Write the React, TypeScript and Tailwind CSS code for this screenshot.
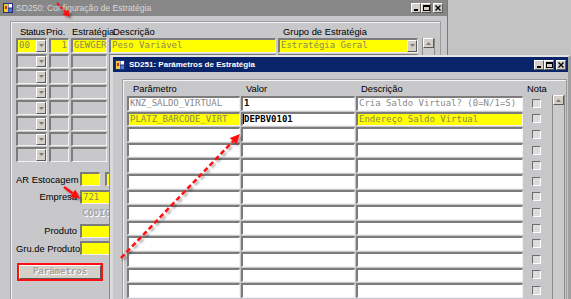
import React from "react";

const sunken =
  "border-t-2 border-l-2 border-t-[#7c7c7c] border-l-[#7c7c7c] border-b border-r border-b-[#f2f2f2] border-r-[#f2f2f2]";
const raised =
  "bg-[#d4d0c8] border-t border-l border-t-white border-l-white border-b border-r border-b-[#5a5a5a] border-r-[#5a5a5a]";
const mono = "font-['DejaVu_Sans_Mono',monospace] text-[9px] leading-none whitespace-nowrap";
const label = "font-['Liberation_Sans',Arial,sans-serif] text-[9.4px] leading-[11px] text-black whitespace-nowrap";

function Field({ className, children }: { className: string; children?: React.ReactNode }) {
  return <div className={`${sunken} ${className} flex items-center overflow-hidden`}>{children}</div>;
}

function DropBtn() {
  return (
    <div className={`${raised} w-[10px] h-full flex items-center justify-center shrink-0`}>
      <svg width="5" height="3" viewBox="0 0 5 3">
        <path d="M0 0h5L2.5 3z" fill="#7a7a7a" />
      </svg>
    </div>
  );
}

function AppIcon() {
  return (
    <svg width="10" height="10" viewBox="0 0 10 10" className="shrink-0">
      <rect width="10" height="10" fill="#20307a" />
      <rect x="1" y="1" width="4" height="8" fill="#f0c830" />
      <rect x="5.5" y="1" width="3.5" height="3.5" fill="#ffffff" />
      <rect x="5.5" y="5.5" width="3.5" height="3.5" fill="#4a7ad8" />
      <rect x="2" y="3" width="2" height="3" fill="#d03020" />
    </svg>
  );
}

function TitleButtons() {
  return (
    <div className="flex items-center">
      <div className={`${raised} w-[10px] h-[10px] flex items-end justify-center pb-[1px]`}>
        <div className="w-[4px] h-[2px] bg-black" />
      </div>
      <div className={`${raised} w-[10px] h-[10px] flex items-center justify-center`}>
        <div className="w-[7px] h-[6px] border border-black border-t-2" />
      </div>
      <div className={`${raised} w-[10px] h-[10px] ml-[2px] flex items-center justify-center`}>
        <svg width="6" height="6" viewBox="0 0 6 6">
          <path d="M0.5 0.5L5.5 5.5M5.5 0.5L0.5 5.5" stroke="#000" strokeWidth="1.4" />
        </svg>
      </div>
    </div>
  );
}

function Check() {
  return (
    <div className="w-[9px] h-[9px] border-t border-l border-t-[#6e6e6e] border-l-[#6e6e6e] border-b border-r border-b-white border-r-white bg-[#dcdcdc]" />
  );
}

function ScrollUp({ h }: { h: string }) {
  return (
    <div className={`${h} w-[13px] flex flex-col border-l border-l-[#8a8a8a] border-r border-r-[#8a8a8a] bg-[#cbcbcb]`}>
      <div className={`${raised} h-[10px] flex items-center justify-center`}>
        <svg width="5" height="3" viewBox="0 0 5 3">
          <path d="M0 3h5L2.5 0z" fill="#7a7a7a" />
        </svg>
      </div>
    </div>
  );
}

function Window1() {
  const grayRows = [0, 1, 2, 3, 4, 5, 6];
  const yText = "text-[#8a8a52]";
  return (
    <div className="absolute left-0 top-0 w-[448px] h-[330px] flex flex-col bg-[#c8c7ca] border-r border-r-[#7a7a7a]">
      <div className="h-[16px] bg-[#878787] flex items-center pl-[3px] pr-[4px] shrink-0">
        <AppIcon />
        <span className="ml-[3px] font-['Liberation_Sans',Arial,sans-serif] text-[8.6px] text-[#d8d8d8] whitespace-nowrap flex-1">
          SD250: Configuração de Estratégia
        </span>
        <TitleButtons />
      </div>
      <div className="pl-[10px] pt-[5px]">
        <div className="w-[431px] h-[320px] border border-[#9c9c9c] shadow-[inset_1px_1px_0_#f4f4f4] pl-[5px]">
          <div className="h-[16px] flex items-end pb-[1px]">
            <span className={`${label} w-[26px] ml-[4px] tracking-[-0.3px]`}>Status</span>
            <span className={`${label} w-[26px]`}>Prio.</span>
            <span className={`${label} w-[41px]`}>Estratégia</span>
            <span className={`${label} w-[170px]`}>Descrição</span>
            <span className={label}>Grupo de Estratégia</span>
          </div>
          <div className="flex gap-[4px]">
            <div className="flex flex-col gap-[1px]">
              <div className="h-[14.6px] flex gap-[2px]">
                <Field className="w-[31px] bg-[#ffff00]">
                  <span className={`${mono} ${yText} flex-1 pl-[1px]`}>00</span>
                  <DropBtn />
                </Field>
                <Field className="w-[20px] bg-[#ffff00] justify-end">
                  <span className={`${mono} ${yText} pr-[1px]`}>1</span>
                </Field>
                <Field className="w-[36px] bg-[#ffff00]">
                  <span className={`${mono} ${yText} pl-[1px]`}>GEWGER</span>
                </Field>
                <Field className="w-[167px] bg-[#ffff00]">
                  <span className={`${mono} ${yText} pl-[1px]`}>Peso Variável</span>
                </Field>
                <Field className="w-[140px] bg-[#ffff00]">
                  <span className={`${mono} ${yText} flex-1 pl-[1px]`}>Estratégia Geral</span>
                  <DropBtn />
                </Field>
              </div>
              {grayRows.map((i) => (
                <div key={i} className="h-[14.6px] flex gap-[2px]">
                  <Field className="w-[31px] justify-end">
                    <DropBtn />
                  </Field>
                  <Field className="w-[20px]" />
                  <Field className="w-[36px]" />
                  <Field className="w-[167px]" />
                  <Field className="w-[140px] justify-end">
                    <DropBtn />
                  </Field>
                </div>
              ))}
            </div>
            <ScrollUp h="h-[124px]" />
          </div>

          <div className="mt-[10px] flex flex-col gap-[3.5px]">
            <div className="h-[14px] flex items-center gap-[3px]">
              <span className={`${label} w-[61px] text-right`}>AR Estocagem</span>
              <Field className="w-[20px] h-full bg-[#ffff00]" />
              <Field className="w-[30px] h-full bg-[#ffff00] ml-[2px]" />
            </div>
            <div className="h-[14px] flex items-center gap-[3px]">
              <span className={`${label} w-[61px] text-right`}>Empresa</span>
              <Field className="w-[60px] h-full bg-[#ffff00]">
                <span className={`${mono} ${yText} pl-[1px]`}>721</span>
              </Field>
            </div>
            <div className="h-[13px] flex items-center">
              <span className={`${mono} font-bold text-[#a2a2a2] ml-[66px] tracking-[0.3px] [text-shadow:1px_1px_0_#ffffff]`}>
                CODIGO
              </span>
            </div>
            <div className="h-[14px] flex items-center gap-[3px]">
              <span className={`${label} w-[61px] text-right`}>Produto</span>
              <Field className="w-[60px] h-full bg-[#ffff00]" />
            </div>
            <div className="h-[14px] flex items-center gap-[3px]">
              <span className={`${label} w-[61px] text-right`}>Gru.de Produto</span>
              <Field className="w-[60px] h-full bg-[#ffff00]" />
            </div>
            <div className="mt-[4px] ml-[1px] w-[86px] h-[18px] border-2 border-[#ff1010] p-0">
              <div className={`${raised} w-full h-full flex items-center justify-center`}>
                <span className={`${mono} font-bold text-[#a0a0a0] [text-shadow:1px_1px_0_#ffffff]`}>Parâmetros</span>
              </div>
            </div>
          </div>
        </div>
      </div>
    </div>
  );
}

function Window2() {
  const rows = Array.from({ length: 14 }, (_, i) => i);
  return (
    <div className="absolute left-[110px] top-[55px] w-[461px] h-[260px] flex flex-col bg-[#c8c7ca] border-t-2 border-t-[#e4e4e4] border-l-[3px] border-l-[#dadada] border-r-[3px] border-r-[#a0a0a0] shadow-[-1px_0_0_#8a8a8a]">
      <div className="h-[15px] bg-[#0a246a] flex items-center pl-[2px] pr-[2px] shrink-0">
        <AppIcon />
        <span className="ml-[4px] font-['Liberation_Sans',Arial,sans-serif] font-bold text-[8px] text-white whitespace-nowrap flex-1">
          SD251: Parâmetros de Estratégia
        </span>
        <TitleButtons />
      </div>
      <div className="pl-[9px] pt-[7px]">
        <div className="w-[445px] h-[240px] border border-[#9c9c9c] shadow-[inset_1px_1px_0_#f4f4f4] pl-[4px]">
          <div className="h-[16px] flex items-end pb-[2px]">
            <span className={`${label} w-[113px] ml-[6px]`}>Parâmetro</span>
            <span className={`${label} w-[115px]`}>Valor</span>
            <span className={`${label} w-[166px]`}>Descrição</span>
            <span className={label}>Nota</span>
          </div>
          <div className="flex">
            <div className="flex flex-col gap-[1px]">
              {rows.map((i) => {
                const yellow = i === 1;
                return (
                  <div key={i} className="h-[14.6px] flex gap-[1px]">
                    <Field className={`w-[113px] ${yellow ? "bg-[#ffff00]" : "bg-white"}`}>
                      {i === 0 && <span className={`${mono} text-[#8a8a8a] pl-[1px]`}>KNZ_SALDO_VIRTUAL</span>}
                      {i === 1 && <span className={`${mono} text-[#8a8a52] pl-[1px]`}>PLATZ_BARCODE_VIRT</span>}
                    </Field>
                    <Field className="w-[114px] bg-white">
                      {i === 0 && <span className={`${mono} font-bold text-black pl-[1px]`}>1</span>}
                      {i === 1 && (
                        <>
                          <span className="w-[1px] h-[10px] bg-black" />
                          <span className={`${mono} font-bold text-black`}>DEPBV0101</span>
                        </>
                      )}
                    </Field>
                    <Field className={`w-[167px] ${yellow ? "bg-[#ffff00]" : "bg-white"}`}>
                      {i === 0 && <span className={`${mono} text-[#8a8a8a] pl-[1px]`}>Cria Saldo Virtual? (0=N/1=S)</span>}
                      {i === 1 && <span className={`${mono} text-[#8a8a52] pl-[1px]`}>Endereço Saldo Virtual</span>}
                    </Field>
                    <div className="w-[27px] flex items-center pl-[8px]">
                      <Check />
                    </div>
                  </div>
                );
              })}
            </div>
            <div className="ml-[1px] -mt-[1px]">
              <ScrollUp h="h-[230px]" />
            </div>
          </div>
        </div>
      </div>
    </div>
  );
}

function Arrows() {
  return (
    <svg className="absolute left-0 top-0 pointer-events-none" width="571" height="299" viewBox="0 0 571 299">
      <defs>
        <filter id="sh" x="-20%" y="-20%" width="140%" height="140%">
          <feDropShadow dx="2" dy="2" stdDeviation="1.2" floodColor="#000" floodOpacity="0.35" />
        </filter>
      </defs>
      <g filter="url(#sh)">
        <line x1="57" y1="3" x2="65.2" y2="11.9" stroke="#ff1010" strokeWidth="2" strokeDasharray="3 2" />
        <polygon points="70,17 62.3,14.6 68.2,9.2" fill="#ff1010" />
        <line x1="64" y1="187" x2="72.5" y2="193.3" stroke="#ff1010" strokeWidth="2.5" />
        <polygon points="80,198.5 69.9,196.9 75.2,189.6" fill="#ff1010" />
        <line x1="121" y1="258" x2="233" y2="141.2" stroke="#ff1010" strokeWidth="2.5" strokeDasharray="5 3" />
        <polygon points="240,134 236.3,144.3 229.8,138.1" fill="#ff1010" />
      </g>
    </svg>
  );
}

export default function App() {
  return (
    <div className="relative w-[571px] h-[299px] overflow-hidden bg-[#c3c3c3] font-['Liberation_Sans',Arial,sans-serif]">
      <Window1 />
      <Window2 />
      <Arrows />
    </div>
  );
}
